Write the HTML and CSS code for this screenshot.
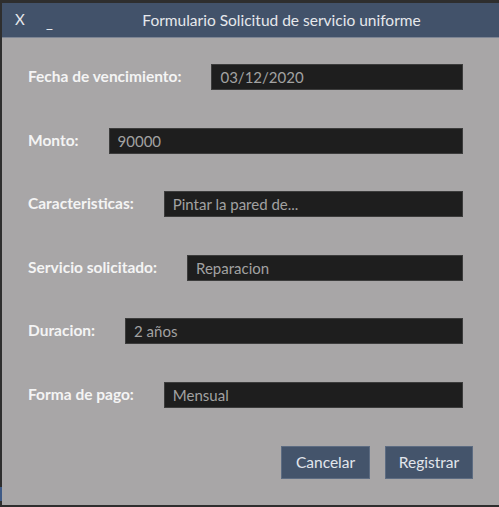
FILE: index.html
```html
<!DOCTYPE html>
<html lang="es">
<head>
<meta charset="utf-8">
<title>Formulario Solicitud de servicio uniforme</title>
<link rel="stylesheet" href="styles.css">
</head>
<body>
<div class="window">
  <div class="titlebar">
    <span class="tb-btn close">X</span>
    <span class="tb-btn min">_</span>
    <span class="title">Formulario Solicitud de servicio uniforme</span>
  </div>
  <div class="content">
    <form class="form">
      <div class="row"><label class="label">Fecha de vencimiento:</label><div class="field">03/12/2020</div></div>
      <div class="row"><label class="label">Monto:</label><div class="field">90000</div></div>
      <div class="row"><label class="label">Caracteristicas:</label><div class="field">Pintar la pared de...</div></div>
      <div class="row"><label class="label">Servicio solicitado:</label><div class="field">Reparacion</div></div>
      <div class="row"><label class="label">Duracion:</label><div class="field">2 años</div></div>
      <div class="row"><label class="label">Forma de pago:</label><div class="field">Mensual</div></div>
    </form>
    <div class="actions">
      <button class="btn" type="button">Cancelar</button>
      <button class="btn" type="button">Registrar</button>
    </div>
  </div>
  <div class="side-mark"></div>
</div>
</body>
</html>
```

FILE: styles.css
```css
html, body {
  margin: 0;
  padding: 0;
  background: #a8a6a7;
}

body {
  width: 499px;
  height: 507px;
  overflow: hidden;
  font-family: Lato, "Noto Sans", sans-serif;
}

.window {
  position: relative;
  box-sizing: border-box;
  width: 499px;
  height: 507px;
  border-top: 3px solid #2e2e2e;
  border-left: 2px solid #2e2e2e;
  border-bottom: 2px solid #2e2e2e;
  background: #a8a6a7;
  display: flex;
  flex-direction: column;
}

.titlebar {
  height: 34px;
  background: #42526a;
  border-bottom: 1px solid #7d8594;
  position: relative;
  display: flex;
  align-items: center;
  color: #e6e8ec;
  font-size: 15.5px;
}

.tb-btn {
  position: absolute;
  top: 7px;
  font-size: 15px;
}

.close { left: 13px; }
.min { left: 44px; top: 10px; }

.title {
  flex: 1;
  text-align: center;
  padding-left: 62px;
}

.content {
  flex: 1;
  display: flex;
  flex-direction: column;
  padding: 26px 0 0 26px;
}

.form {
  display: flex;
  flex-direction: column;
  gap: 37.6px;
  padding-right: 36px;
  margin: 0;
}

.row {
  display: flex;
  align-items: center;
  gap: 30px;
  height: 26px;
}

.label {
  color: #f4f4f4;
  font-weight: 700;
  font-size: 15.5px;
  white-space: nowrap;
  position: relative;
  top: -1px;
}

.field {
  flex: 1;
  box-sizing: border-box;
  height: 26px;
  background: #1e1e1e;
  border: 1px solid #3c3c3c;
  color: #a2a2a2;
  font-size: 15px;
  line-height: 24px;
  padding-left: 8px;
}

.actions {
  display: flex;
  justify-content: flex-end;
  gap: 15px;
  padding-right: 26px;
  margin-top: 38px;
}

.btn {
  box-sizing: border-box;
  height: 33px;
  background: #44546b;
  border: 1px solid #5d6c82;
  color: #e2e6ec;
  font-family: inherit;
  font-size: 15.5px;
  padding: 0;
}

.btn:first-child { width: 89px; }
.btn:last-child { width: 88px; }

.side-mark {
  position: absolute;
  left: -2px;
  top: 484px;
  width: 2px;
  height: 14px;
  background: #3e5a86;
}
```
